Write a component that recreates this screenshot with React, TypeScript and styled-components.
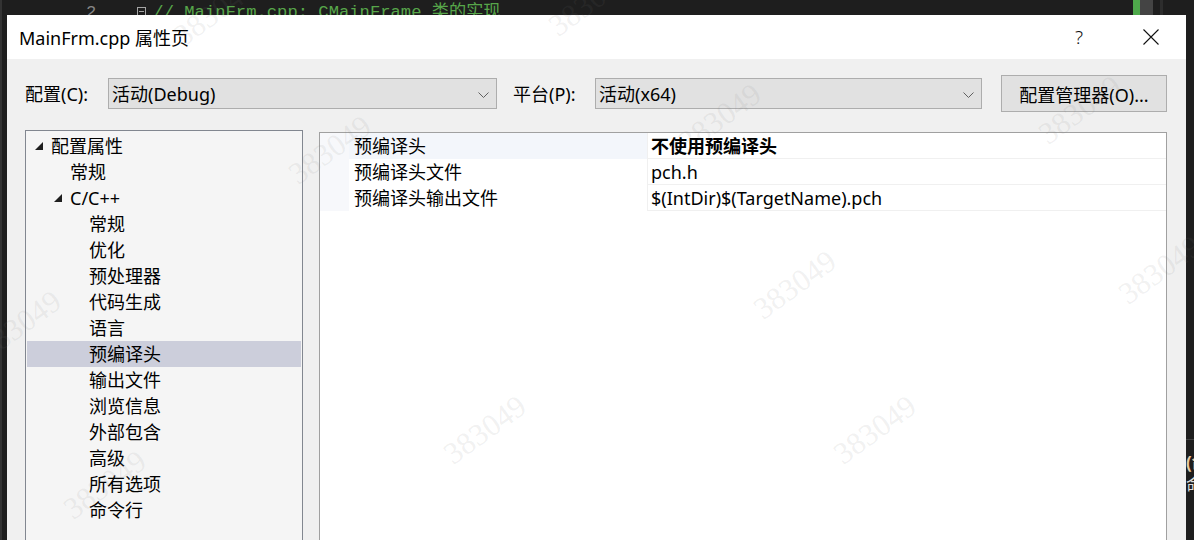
import styled, { createGlobalStyle } from "styled-components";

const GlobalStyle = createGlobalStyle`
  html, body {
    margin: 0;
    padding: 0;
    background: #1e1e1e;
  }
  body {
    width: 1194px;
    height: 540px;
    overflow: hidden;
  }
  * {
    box-sizing: border-box;
  }
`;

const UI_FONT = `"Noto Sans", "Noto Sans CJK SC", sans-serif`;
const MONO_FONT = `"Liberation Mono", "Noto Sans CJK SC", monospace`;

const Page = styled.div`
  position: relative;
  width: 1194px;
  height: 540px;
  overflow: hidden;
  display: flex;
  flex-direction: column;
  background: #1e1e1e;
  font-family: ${UI_FONT};
  color: #000;
`;

/* ---------- editor strip behind the dialog ---------- */
const EditorStrip = styled.div`
  height: 15px;
  flex: none;
  display: flex;
  align-items: flex-start;
  overflow: hidden;
  border-left: 2px solid #333;
  font-family: ${MONO_FONT};
  font-size: 17.2px;
  line-height: 20px;
`;

const LineNo = styled.span`
  margin-left: 84px;
  padding-top: 3px;
  color: #858585;
`;

const FoldBox = styled.span`
  position: relative;
  flex: none;
  width: 9px;
  height: 9px;
  margin: 7px 0 0 41px;
  border: 1px solid #a5a5a5;
  &::after {
    content: "";
    position: absolute;
    left: 1px;
    right: 1px;
    top: 3px;
    height: 1px;
    background: #a5a5a5;
  }
`;

const CodeText = styled.span`
  margin-left: 7px;
  padding-top: 3px;
  color: #57a64a;
  white-space: pre;
`;

const ScrollMarks = styled.div`
  margin-left: auto;
  margin-right: 31px;
  display: flex;
  height: 15px;
`;

const Mark = styled.span<{ $color: string; $w: number }>`
  width: ${(p) => p.$w}px;
  height: 15px;
  background: ${(p) => p.$color};
`;

/* ---------- dialog ---------- */
const Middle = styled.div`
  flex: 1;
  display: flex;
  min-height: 0;
`;

const LeftEdge = styled.div`
  width: 7px;
  flex: none;
  background: #1e1e1e;
  border-left: 2px solid #333;
`;

const RightEdge = styled.div`
  flex: 1;
  background: #1e1e1e;
  overflow: hidden;
  padding-top: 424px;
  font-size: 17px;
  line-height: 22px;
  color: #dcdcdc;
  white-space: nowrap;
  div:first-child {
    border-top: 1px solid #3f3f3f;
    padding-top: 12px;
    font-weight: 700;
    color: #e8c9a0;
  }
`;

const Dialog = styled.div`
  width: 1179px;
  flex: none;
  display: flex;
  flex-direction: column;
  background: #f0f0f0;
`;

const TitleBar = styled.div`
  height: 44px;
  flex: none;
  display: flex;
  align-items: center;
  padding: 0 12px 0 12px;
  background: #fff;
  font-size: 18px;
`;

const Title = styled.span`
  flex: 1;
`;

const CaptionButtons = styled.div`
  display: flex;
  gap: 26px;
`;

const CaptionButton = styled.div`
  width: 46px;
  height: 44px;
  display: flex;
  align-items: center;
  justify-content: center;
  font-size: 19px;
  font-weight: 300;
  color: #111;
`;

const Body = styled.div`
  flex: 1;
  padding: 16px 19px 0 18px;
  font-size: 18px;
`;

const ConfigRow = styled.div`
  height: 37px;
  display: flex;
  align-items: center;
`;

const FieldLabel = styled.span<{ $w: number; $gap?: number }>`
  width: ${(p) => p.$w}px;
  margin-left: ${(p) => p.$gap ?? 0}px;
  flex: none;
  padding-top: 2px;
  line-height: 31px;
`;

const Combo = styled.div<{ $w: number }>`
  width: ${(p) => p.$w}px;
  height: 31px;
  flex: none;
  display: flex;
  align-items: center;
  justify-content: space-between;
  padding: 2px 7px 0 3px;
  border: 1px solid #adadad;
  background: #e1e1e1;
  line-height: 27px;
`;

const Button = styled.div`
  width: 166px;
  height: 37px;
  margin-left: 19px;
  flex: none;
  display: flex;
  align-items: center;
  justify-content: center;
  padding-top: 1px;
  border: 1px solid #adadad;
  background: #e1e1e1;
`;

const Panels = styled.div`
  margin-top: 18px;
  height: 430px;
  display: flex;
  align-items: flex-start;
  gap: 16px;
`;

const Tree = styled.div`
  width: 278px;
  height: 430px;
  flex: none;
  padding: 2px 1px;
  border: 1px solid #828790;
  background: #f5f5f5;
`;

const TreeRow = styled.div<{ $level: number; $selected?: boolean }>`
  height: 26px;
  display: flex;
  align-items: center;
  padding-left: ${(p) => 8 + p.$level * 19}px;
  line-height: 26px;
  white-space: nowrap;
  background: ${(p) => (p.$selected ? "#cccedb" : "transparent")};
`;

const Expander = styled.span`
  width: 16px;
  flex: none;
  display: flex;
  align-items: center;
`;

const Grid = styled.div`
  width: 848px;
  height: 428px;
  flex: none;
  margin-top: 2px;
  border: 1px solid #a0a0a0;
  background: #fff;
`;

const GridRow = styled.div`
  height: 26px;
  display: grid;
  grid-template-columns: 29px 298px 1fr;
  border-bottom: 1px solid #f0f0f0;
  line-height: 26px;
  white-space: nowrap;
`;

const Gutter = styled.div`
  background: #f7f8fb;
`;

const NameCell = styled.div<{ $active?: boolean }>`
  padding-left: 5px;
  background: ${(p) => (p.$active ? "#f3f6fb" : "#fff")};
`;

const ValueCell = styled.div<{ $bold?: boolean }>`
  padding-left: 3px;
  border-left: 1px solid #f0f0f0;
  font-weight: ${(p) => (p.$bold ? 700 : 400)};
`;

/* ---------- watermark overlay ---------- */
const WatermarkLayer = styled.div`
  position: absolute;
  inset: 0;
  pointer-events: none;
  z-index: 5;
`;

const Watermark = styled.span<{ $x: number; $y: number }>`
  position: absolute;
  left: ${(p) => p.$x}px;
  top: ${(p) => p.$y}px;
  transform: translate(-50%, -50%) rotate(-36deg);
  font-family: "Liberation Serif", "DejaVu Serif", serif;
  font-size: 31px;
  color: rgba(120, 120, 120, 0.11);
  white-space: nowrap;
`;

const Triangle = () => (
  <svg width="8" height="8" viewBox="0 0 8 8">
    <polygon points="8,0 8,8 0,8" fill="#1e1e1e" />
  </svg>
);

const Chevron = () => (
  <svg width="11" height="6" viewBox="0 0 11 6">
    <polyline points="0.5,0.5 5.5,5.5 10.5,0.5" fill="none" stroke="#606060" strokeWidth="1" />
  </svg>
);

const CloseIcon = () => (
  <svg width="16" height="16" viewBox="0 0 16 16">
    <path d="M0.5 0.5 L15.5 15.5 M15.5 0.5 L0.5 15.5" stroke="#111" strokeWidth="1.1" />
  </svg>
);

const treeItems: { label: string; level: number; expanded?: boolean; selected?: boolean }[] = [
  { label: "配置属性", level: 0, expanded: true },
  { label: "常规", level: 1 },
  { label: "C/C++", level: 1, expanded: true },
  { label: "常规", level: 2 },
  { label: "优化", level: 2 },
  { label: "预处理器", level: 2 },
  { label: "代码生成", level: 2 },
  { label: "语言", level: 2 },
  { label: "预编译头", level: 2, selected: true },
  { label: "输出文件", level: 2 },
  { label: "浏览信息", level: 2 },
  { label: "外部包含", level: 2 },
  { label: "高级", level: 2 },
  { label: "所有选项", level: 2 },
  { label: "命令行", level: 2 },
];

const props = [
  { name: "预编译头", value: "不使用预编译头", bold: true },
  { name: "预编译头文件", value: "pch.h" },
  { name: "预编译头输出文件", value: "$(IntDir)$(TargetName).pch" },
];

const marks = [
  [215, 12],
  [590, 2],
  [330, 150],
  [720, 118],
  [1080, 110],
  [795, 285],
  [1160, 270],
  [20, 325],
  [485, 430],
  [875, 430],
  [105, 485],
];

export default function App() {
  return (
    <>
      <GlobalStyle />
      <Page>
        <EditorStrip>
          <LineNo>2</LineNo>
          <FoldBox />
          <CodeText>// MainFrm.cpp: CMainFrame 类的实现</CodeText>
          <ScrollMarks>
            <Mark $color="#4ea94b" $w={7} />
            <Mark $color="#444" $w={13} />
            <Mark $color="#1e1e1e" $w={7} />
            <Mark $color="#2d2d2d" $w={3} />
          </ScrollMarks>
        </EditorStrip>
        <Middle>
          <LeftEdge />
          <Dialog>
            <TitleBar>
              <Title>MainFrm.cpp 属性页</Title>
              <CaptionButtons>
                <CaptionButton>?</CaptionButton>
                <CaptionButton>
                  <CloseIcon />
                </CaptionButton>
              </CaptionButtons>
            </TitleBar>
            <Body>
              <ConfigRow>
                <FieldLabel $w={83}>配置(C):</FieldLabel>
                <Combo $w={389}>
                  <span>活动(Debug)</span>
                  <Chevron />
                </Combo>
                <FieldLabel $w={82} $gap={16}>
                  平台(P):
                </FieldLabel>
                <Combo $w={387}>
                  <span>活动(x64)</span>
                  <Chevron />
                </Combo>
                <Button>配置管理器(O)...</Button>
              </ConfigRow>
              <Panels>
                <Tree>
                  {treeItems.map((item, i) => (
                    <TreeRow key={i} $level={item.level} $selected={item.selected}>
                      <Expander>{item.expanded && <Triangle />}</Expander>
                      {item.label}
                    </TreeRow>
                  ))}
                </Tree>
                <Grid>
                  {props.map((p, i) => (
                    <GridRow key={p.name}>
                      <Gutter />
                      <NameCell $active={i === 0}>{p.name}</NameCell>
                      <ValueCell $bold={p.bold}>{p.value}</ValueCell>
                    </GridRow>
                  ))}
                </Grid>
              </Panels>
            </Body>
          </Dialog>
          <RightEdge>
            <div>(命</div>
            <div>命</div>
          </RightEdge>
        </Middle>
        <WatermarkLayer>
          {marks.map(([x, y], i) => (
            <Watermark key={i} $x={x} $y={y}>
              383049
            </Watermark>
          ))}
        </WatermarkLayer>
      </Page>
    </>
  );
}
